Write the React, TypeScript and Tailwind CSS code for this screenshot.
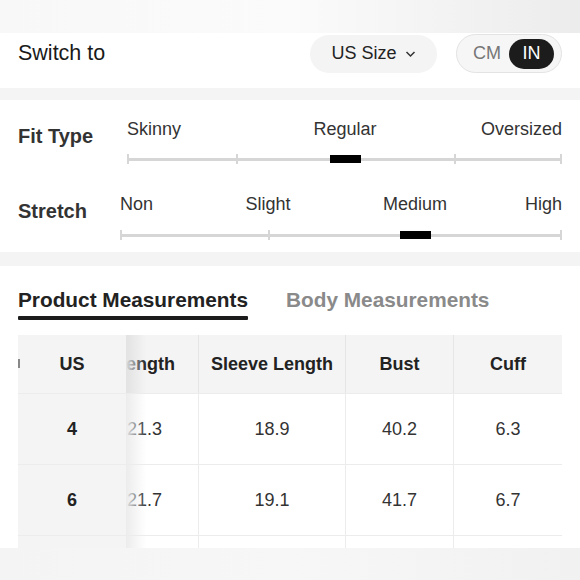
import React from "react";

const F = { fontFamily: '"Liberation Sans", Arial, sans-serif' };

function Slider({
  labels,
  positions,
  ticks,
  marker,
  left,
  trackTop,
}: {
  labels: string[];
  positions: number[];
  ticks: number[];
  marker: number;
  left: number;
  trackTop: number;
}) {
  return (
    <div className="relative flex-1 h-[52px]">
      {labels.map((l, i) => (
        <span
          key={l}
          className="absolute top-0 text-[18px] text-[#333] leading-[20px] whitespace-nowrap"
          style={{
            left: positions[i] - left,
            transform:
              i === 0 ? "none" : i === labels.length - 1 ? "translateX(-100%)" : "translateX(-50%)",
          }}
        >
          {l}
        </span>
      ))}
      <div className="absolute left-0 right-0 h-[3px] bg-[#d6d6d6]" style={{ top: trackTop }} />
      {ticks.map((t) => (
        <div
          key={t}
          className="absolute w-[2px] h-[10px] bg-[#d6d6d6]"
          style={{ left: t - left - 1, top: trackTop - 4 }}
        />
      ))}
      <div
        className="absolute w-[31px] h-[8px] bg-black"
        style={{ left: marker - left, top: trackTop - 3 }}
      />
    </div>
  );
}

export default function App() {
  const cols = "grid-cols-[108px_73px_147px_108px_108px]";
  const rows = [
    ["4", "21.3", "18.9", "40.2", "6.3"],
    ["6", "21.7", "19.1", "41.7", "6.7"],
    ["", "", "", "", ""],
  ];
  return (
    <div className="w-[580px] h-[580px] overflow-hidden bg-[#f4f4f4] relative" style={F}>
      <div className="h-[33px] bg-gradient-to-r from-[#f8f8f8] via-[#fbfbfb] to-[#ececec]" />
      {/* Switch row */}
      <div className="h-[55px] bg-white flex items-start pt-[1px] px-[18px]">
        <span className="text-[21.5px] leading-[38px] text-[#1a1a1a]">Switch to</span>
        <div className="ml-auto flex items-center gap-[19px]">
          <div className="h-[38px] w-[127px] rounded-full bg-[#f4f4f4] flex items-center justify-center gap-[8px]">
            <span className="text-[18px] text-[#222]">US Size</span>
            <svg width="11" height="8" viewBox="0 0 11 8" className="mt-[1px]">
              <path d="M1.5 2 L5.5 6 L9.5 2" fill="none" stroke="#333" strokeWidth="1.5" />
            </svg>
          </div>
          <div className="h-[39px] w-[106px] rounded-full bg-[#f6f6f6] border border-[#e3e3e3] flex items-center pl-[16px] pr-[7px]">
            <span className="text-[18px] text-[#777]">CM</span>
            <div className="ml-auto h-[30px] w-[45px] rounded-full bg-[#1c1c1c] flex items-center justify-center">
              <span className="text-[18px] text-white">IN</span>
            </div>
          </div>
        </div>
      </div>
      <div className="h-[12px] bg-[#f4f4f4]" />
      {/* Fit section */}
      <div className="h-[152px] bg-white px-[18px] pt-[19px]">
        <div className="flex">
          <div className="w-[109px] pt-[6px] text-[20px] leading-[22px] font-bold text-[#333]">Fit Type</div>
          <Slider
            labels={["Skinny", "Regular", "Oversized"]}
            positions={[127, 345, 562]}
            ticks={[128, 237, 455, 561]}
            marker={330}
            left={127}
            trackTop={39}
          />
        </div>
        <div className="flex mt-[23px]">
          <div className="w-[102px] pt-[6px] text-[20px] leading-[22px] font-bold text-[#333]">Stretch</div>
          <Slider
            labels={["Non", "Slight", "Medium", "High"]}
            positions={[120, 268, 415, 562]}
            ticks={[121, 269, 561]}
            marker={400}
            left={120}
            trackTop={40}
          />
        </div>
      </div>
      <div className="h-[14px] bg-[#f4f4f4]" />
      {/* Tabs + table */}
      <div className="bg-white px-[18px] pt-[23px] h-[282px]">
        <div className="flex gap-[38px]">
          <div className="flex flex-col">
            <span className="text-[20.8px] font-bold text-[#222] leading-[22px]">Product Measurements</span>
            <div className="mt-[5px] h-[4px] bg-[#1c1c1c] rounded-[1px]" />
          </div>
          <span className="text-[20.8px] font-bold text-[#8a8a8a] leading-[22px]">Body Measurements</span>
        </div>
        <div className="mt-[15px] w-[544px] relative">
          <div className={`grid ${cols} h-[58px] bg-[#f4f4f4]`}>
            <div className="relative flex items-center justify-center text-[18px] font-bold text-[#222]">
              <div className="absolute left-0 top-[24px] w-[2px] h-[9px] bg-[#888]" />
              US
            </div>
            <div className="relative flex items-center justify-start border-r border-[#e6e6e6] text-[18px] font-bold text-[#222] overflow-hidden">
              <span>ength</span>
              <div className="absolute left-0 top-0 bottom-0 w-[20px] bg-gradient-to-r from-[#e2e2e2] to-transparent" />
            </div>
            <div className="flex items-center justify-center border-r border-[#e6e6e6] text-[18px] font-bold text-[#222]">
              Sleeve Length
            </div>
            <div className="flex items-center justify-center border-r border-[#e6e6e6] text-[18px] font-bold text-[#222]">
              Bust
            </div>
            <div className="flex items-center justify-center text-[18px] font-bold text-[#222]">Cuff</div>
          </div>
          {rows.map((r, i) => (
            <div key={i} className={`grid ${cols} h-[71px] border-t border-[#ececec]`}>
              <div className="flex items-center justify-center bg-[#f4f4f4] text-[18px] font-bold text-[#222]">
                {r[0]}
              </div>
              <div className="relative flex items-center pl-[1px] border-r border-[#ececec] text-[18px] text-[#333]">
                {r[1]}
                <div className="absolute left-0 top-0 bottom-0 w-[20px] bg-gradient-to-r from-[#ececec] to-transparent" />
              </div>
              <div className="flex items-center justify-center border-r border-[#ececec] text-[18px] text-[#333]">
                {r[2]}
              </div>
              <div className="flex items-center justify-center border-r border-[#ececec] text-[18px] text-[#333]">
                {r[3]}
              </div>
              <div className="flex items-center justify-center text-[18px] text-[#333]">{r[4]}</div>
            </div>
          ))}
        </div>
      </div>
      {/* bottom fade overlay */}
      <div className="absolute left-0 right-0 top-[548px] bottom-0 bg-gradient-to-r from-[#f4f4f4] via-[#f7f7f7] to-[#f1f1f1]" />
    </div>
  );
}
